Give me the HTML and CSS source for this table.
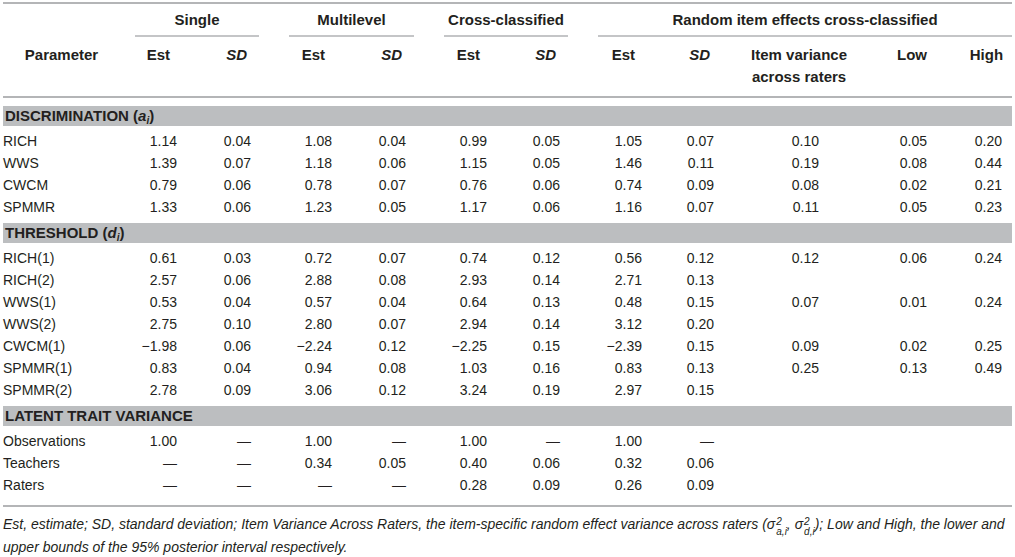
FILE: index.html
```html
<!DOCTYPE html>
<html>
<head>
<meta charset="utf-8">
<link rel="stylesheet" href="styles.css">
</head>
<body>
<div class="page">
<table class="tbl">
<colgroup>
<col class="w-param"><col class="w-77"><col class="w-77"><col class="w-78"><col class="w-77"><col class="w-78"><col class="w-76"><col class="w-79"><col class="w-75"><col class="w-124"><col class="w-86"><col class="w-65">
</colgroup>
<thead>
<tr class="grp-row">
<th></th>
<th colspan="2" class="grp"><div class="gl">Single</div></th>
<th colspan="2" class="grp"><div class="gl">Multilevel</div></th>
<th colspan="2" class="grp"><div class="gl">Cross-classified</div></th>
<th colspan="5" class="grp"><div class="gl gl-last">Random item effects cross-classified</div></th>
</tr>
<tr class="col-row">
<th class="h-param">Parameter</th>
<th class="h-num">Est</th><th class="h-num"><i>SD</i></th>
<th class="h-num">Est</th><th class="h-num"><i>SD</i></th>
<th class="h-num">Est</th><th class="h-num"><i>SD</i></th>
<th class="h-num">Est</th><th class="h-num"><i>SD</i></th>
<th class="h-iv">Item variance<br>across raters</th>
<th class="h-low">Low</th>
<th class="h-high">High</th>
</tr>
</thead>
<tbody>
<tr class="sec sec-first"><td colspan="12"><div class="bar">DISCRIMINATION (<i>a<sub>i</sub></i>)</div></td></tr>
<tr class="r"><td>RICH</td><td>1.14</td><td>0.04</td><td>1.08</td><td>0.04</td><td>0.99</td><td>0.05</td><td>1.05</td><td>0.07</td><td>0.10</td><td>0.05</td><td>0.20</td></tr>
<tr class="r"><td>WWS</td><td>1.39</td><td>0.07</td><td>1.18</td><td>0.06</td><td>1.15</td><td>0.05</td><td>1.46</td><td>0.11</td><td>0.19</td><td>0.08</td><td>0.44</td></tr>
<tr class="r"><td>CWCM</td><td>0.79</td><td>0.06</td><td>0.78</td><td>0.07</td><td>0.76</td><td>0.06</td><td>0.74</td><td>0.09</td><td>0.08</td><td>0.02</td><td>0.21</td></tr>
<tr class="r"><td>SPMMR</td><td>1.33</td><td>0.06</td><td>1.23</td><td>0.05</td><td>1.17</td><td>0.06</td><td>1.16</td><td>0.07</td><td>0.11</td><td>0.05</td><td>0.23</td></tr>
<tr class="sec"><td colspan="12"><div class="bar">THRESHOLD (<i>d<sub>i</sub></i>)</div></td></tr>
<tr class="r"><td>RICH(1)</td><td>0.61</td><td>0.03</td><td>0.72</td><td>0.07</td><td>0.74</td><td>0.12</td><td>0.56</td><td>0.12</td><td>0.12</td><td>0.06</td><td>0.24</td></tr>
<tr class="r"><td>RICH(2)</td><td>2.57</td><td>0.06</td><td>2.88</td><td>0.08</td><td>2.93</td><td>0.14</td><td>2.71</td><td>0.13</td><td></td><td></td><td></td></tr>
<tr class="r"><td>WWS(1)</td><td>0.53</td><td>0.04</td><td>0.57</td><td>0.04</td><td>0.64</td><td>0.13</td><td>0.48</td><td>0.15</td><td>0.07</td><td>0.01</td><td>0.24</td></tr>
<tr class="r"><td>WWS(2)</td><td>2.75</td><td>0.10</td><td>2.80</td><td>0.07</td><td>2.94</td><td>0.14</td><td>3.12</td><td>0.20</td><td></td><td></td><td></td></tr>
<tr class="r"><td>CWCM(1)</td><td>−1.98</td><td>0.06</td><td>−2.24</td><td>0.12</td><td>−2.25</td><td>0.15</td><td>−2.39</td><td>0.15</td><td>0.09</td><td>0.02</td><td>0.25</td></tr>
<tr class="r"><td>SPMMR(1)</td><td>0.83</td><td>0.04</td><td>0.94</td><td>0.08</td><td>1.03</td><td>0.16</td><td>0.83</td><td>0.13</td><td>0.25</td><td>0.13</td><td>0.49</td></tr>
<tr class="r"><td>SPMMR(2)</td><td>2.78</td><td>0.09</td><td>3.06</td><td>0.12</td><td>3.24</td><td>0.19</td><td>2.97</td><td>0.15</td><td></td><td></td><td></td></tr>
<tr class="sec"><td colspan="12"><div class="bar">LATENT TRAIT VARIANCE</div></td></tr>
<tr class="r"><td>Observations</td><td>1.00</td><td>—</td><td>1.00</td><td>—</td><td>1.00</td><td>—</td><td>1.00</td><td>—</td><td></td><td></td><td></td></tr>
<tr class="r"><td>Teachers</td><td>—</td><td>—</td><td>0.34</td><td>0.05</td><td>0.40</td><td>0.06</td><td>0.32</td><td>0.06</td><td></td><td></td><td></td></tr>
<tr class="r"><td>Raters</td><td>—</td><td>—</td><td>—</td><td>—</td><td>0.28</td><td>0.09</td><td>0.26</td><td>0.09</td><td></td><td></td><td></td></tr>
</tbody>
</table>
<div class="foot">
<p class="note"><i>Est</i>, estimate; <i>SD</i>, standard deviation; Item Variance Across Raters, the item-specific random effect variance across raters (<span class="sig">σ<span class="ss"><span class="sup">2</span><span class="sub">a,i</span></span></span>, <span class="sig">σ<span class="ss"><span class="sup">2</span><span class="sub">d,i</span></span></span>); Low and High, the lower and<br>upper bounds of the 95% posterior interval respectively.</p>
</div>
</div>
</body>
</html>
```
FILE: styles.css
```css
html, body {
  margin: 0;
  padding: 0;
  background: #ffffff;
}
body {
  font-family: "Liberation Sans", Arial, Helvetica, sans-serif;
  color: #231f20;
}
.page {
  padding: 2px 3px 0 3px;
}
.tbl {
  width: 1009px;
  border-collapse: collapse;
  table-layout: fixed;
  font-size: 14px;
}
.w-param { width: 117px; }
.w-77 { width: 77px; }
.w-78 { width: 78px; }
.w-76 { width: 76px; }
.w-79 { width: 79px; }
.w-75 { width: 75px; }
.w-124 { width: 124px; }
.w-86 { width: 86px; }
.w-65 { width: 65px; }

th {
  font-weight: bold;
  font-size: 15px;
  padding: 0;
}
.grp-row th {
  border-top: 2px solid #b4b5b7;
  height: 31px;
  vertical-align: top;
}
.gl {
  margin: 0 15px;
  height: 31px;
  line-height: 31px;
  text-align: center;
  border-bottom: 2px solid #c4c5c7;
}
.gl-last {
  margin-right: 0;
}
.col-row th {
  vertical-align: top;
  padding-top: 7px;
  padding-bottom: 8px;
  line-height: 22px;
  border-bottom: 2px solid #b4b5b7;
}
.h-param { text-align: center; }
.col-row th.h-num {
  text-align: right;
  padding-right: 27px;
}
.col-row th.h-iv {
  text-align: center;
  white-space: nowrap;
}
.col-row th.h-low {
  text-align: right;
  padding-right: 20px;
}
.col-row th.h-high {
  text-align: right;
  padding-right: 9px;
}

.sec td {
  padding: 5px 0 4px 0;
}
.sec-first td {
  padding-top: 8px;
}
.bar {
  background: #bcbec0;
  height: 20px;
  line-height: 20px;
  font-weight: bold;
  font-size: 15px;
  padding-left: 2px;
}
.bar sub {
  font-size: 10px;
  line-height: 0;
  vertical-align: -3px;
}

.r td {
  height: 22px;
  line-height: 22px;
  padding: 0;
  text-align: right;
  white-space: nowrap;
}
.r td:first-child {
  text-align: left;
}
.r td:nth-child(2),
.r td:nth-child(4),
.r td:nth-child(6),
.r td:nth-child(8),
.r td:nth-child(11) {
  padding-right: 20px;
}
.r td:nth-child(3),
.r td:nth-child(5),
.r td:nth-child(7),
.r td:nth-child(9) {
  padding-right: 23px;
}
.r td:nth-child(10) {
  padding-right: 42px;
}
.r td:nth-child(12) {
  padding-right: 10px;
}

.foot {
  width: 1009px;
  margin-top: 9px;
  border-top: 2px solid #b4b5b7;
}
.note {
  margin: 0;
  padding-top: 7px;
  font-size: 14px;
  line-height: 21px;
  font-style: italic;
  white-space: nowrap;
}
.sig {
  white-space: nowrap;
}
.ss {
  display: inline-flex;
  flex-direction: column;
  vertical-align: 4px;
  line-height: 10px;
  font-size: 10px;
  margin-left: 1px;
}
.ss .sup, .ss .sub {
  display: block;
}
```
